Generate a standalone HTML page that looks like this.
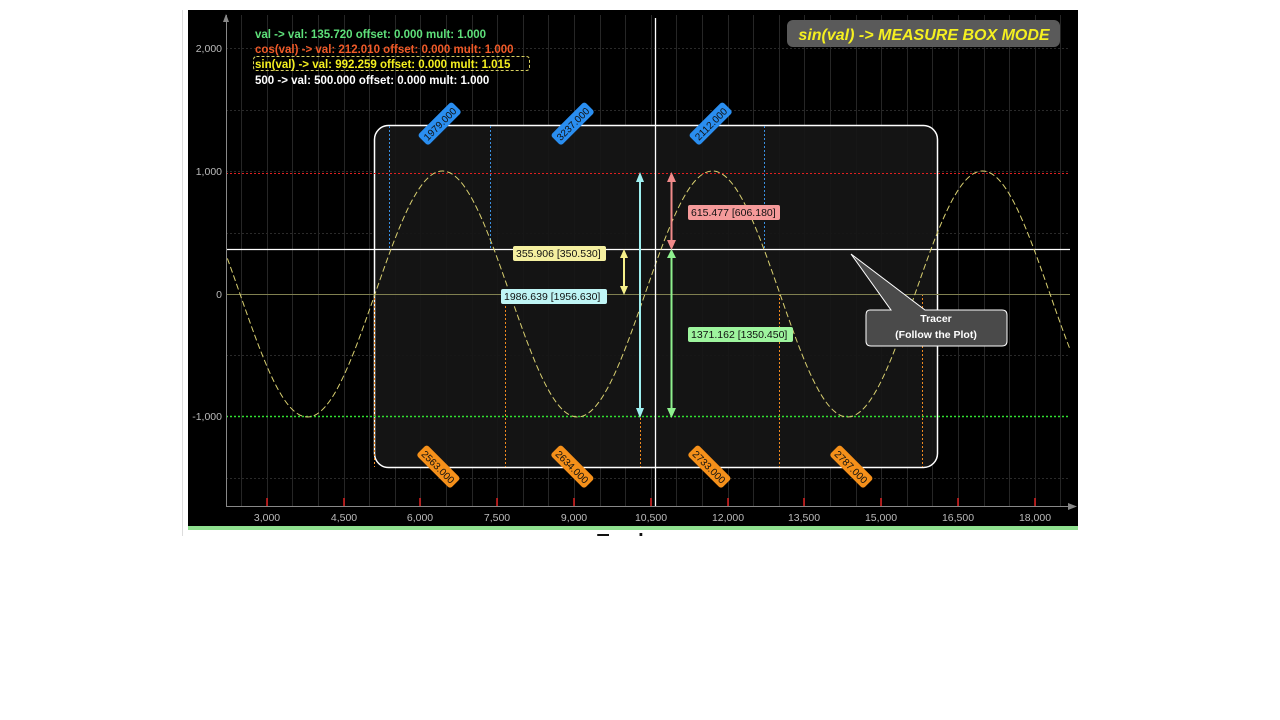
<!DOCTYPE html>
<html><head><meta charset="utf-8"><style>
html,body{margin:0;padding:0;background:#fff;width:1280px;height:720px;overflow:hidden;font-family:"Liberation Sans",sans-serif}
</style></head><body>
<svg width="1280" height="720" xmlns="http://www.w3.org/2000/svg" style="position:absolute;left:0;top:0;font-family:'Liberation Sans',sans-serif">
<defs><clipPath id="pc"><rect x="226" y="15" width="844" height="491"/></clipPath></defs>
<line x1="182.5" y1="10" x2="182.5" y2="536" stroke="#ddd"/>
<rect x="188" y="10" width="890" height="516" fill="#000"/>
<rect x="188" y="526" width="890" height="4" fill="#8fe08f"/>
<g stroke="#2a2a2a" stroke-width="1" stroke-dasharray="2 2">
<line x1="226" y1="48.5" x2="1070" y2="48.5"/><line x1="226" y1="110.5" x2="1070" y2="110.5"/>
<line x1="226" y1="171.5" x2="1070" y2="171.5"/><line x1="226" y1="233.5" x2="1070" y2="233.5"/>
<line x1="226" y1="355.5" x2="1070" y2="355.5"/><line x1="226" y1="478.5" x2="1070" y2="478.5"/>
</g>
<g stroke="#262626" stroke-width="1">
<line x1="241.5" y1="15" x2="241.5" y2="506"/><line x1="267.5" y1="15" x2="267.5" y2="506"/><line x1="292.5" y1="15" x2="292.5" y2="506"/><line x1="318.5" y1="15" x2="318.5" y2="506"/><line x1="344.5" y1="15" x2="344.5" y2="506"/><line x1="369.5" y1="15" x2="369.5" y2="506"/><line x1="395.5" y1="15" x2="395.5" y2="506"/><line x1="420.5" y1="15" x2="420.5" y2="506"/><line x1="446.5" y1="15" x2="446.5" y2="506"/><line x1="472.5" y1="15" x2="472.5" y2="506"/><line x1="497.5" y1="15" x2="497.5" y2="506"/><line x1="523.5" y1="15" x2="523.5" y2="506"/><line x1="548.5" y1="15" x2="548.5" y2="506"/><line x1="574.5" y1="15" x2="574.5" y2="506"/><line x1="600.5" y1="15" x2="600.5" y2="506"/><line x1="625.5" y1="15" x2="625.5" y2="506"/><line x1="651.5" y1="15" x2="651.5" y2="506"/><line x1="676.5" y1="15" x2="676.5" y2="506"/><line x1="702.5" y1="15" x2="702.5" y2="506"/><line x1="728.5" y1="15" x2="728.5" y2="506"/><line x1="753.5" y1="15" x2="753.5" y2="506"/><line x1="779.5" y1="15" x2="779.5" y2="506"/><line x1="804.5" y1="15" x2="804.5" y2="506"/><line x1="830.5" y1="15" x2="830.5" y2="506"/><line x1="856.5" y1="15" x2="856.5" y2="506"/><line x1="881.5" y1="15" x2="881.5" y2="506"/><line x1="907.5" y1="15" x2="907.5" y2="506"/><line x1="932.5" y1="15" x2="932.5" y2="506"/><line x1="958.5" y1="15" x2="958.5" y2="506"/><line x1="984.5" y1="15" x2="984.5" y2="506"/><line x1="1009.5" y1="15" x2="1009.5" y2="506"/><line x1="1035.5" y1="15" x2="1035.5" y2="506"/><line x1="1060.5" y1="15" x2="1060.5" y2="506"/>
</g>
<rect x="374.5" y="125.5" width="563" height="342" rx="14" fill="#161616" fill-opacity="0.92" stroke="#fff" stroke-width="1.5"/>
<g stroke="#3a8fe0" stroke-dasharray="2 2">
<line x1="389.5" y1="126" x2="389.5" y2="249"/><line x1="490.5" y1="126" x2="490.5" y2="249"/><line x1="764.5" y1="126" x2="764.5" y2="249"/>
</g>
<g stroke="#f08a20" stroke-dasharray="2 2">
<line x1="374.5" y1="294" x2="374.5" y2="467"/><line x1="505.5" y1="294" x2="505.5" y2="467"/><line x1="640.5" y1="294" x2="640.5" y2="467"/><line x1="779.5" y1="294" x2="779.5" y2="467"/><line x1="922.5" y1="294" x2="922.5" y2="467"/>
</g>
<line x1="226" y1="173.5" x2="1070" y2="173.5" stroke="#e02020" stroke-dasharray="2 2"/>
<line x1="226" y1="416.5" x2="1070" y2="416.5" stroke="#30e030" stroke-width="1.5" stroke-dasharray="2 2"/>
<line x1="226" y1="294.5" x2="1070" y2="294.5" stroke="#808050"/>
<line x1="226" y1="249.5" x2="1070" y2="249.5" stroke="#fff" stroke-width="1.3"/>
<path clip-path="url(#pc)" fill="none" stroke="#d8cf70" stroke-width="1" stroke-dasharray="6 3" d="M105,294 c22.56,-64.6 43.16,-123 67.5,-123 c24.34,0 44.94,58.6 67.5,123 c22.56,64.6 43.16,123 67.5,123 c24.34,0 44.94,-58.6 67.5,-123 c22.56,-64.6 43.16,-123 67.5,-123 c24.34,0 44.94,58.6 67.5,123 c22.56,64.6 43.16,123 67.5,123 c24.34,0 44.94,-58.6 67.5,-123 c22.56,-64.6 43.16,-123 67.5,-123 c24.34,0 44.94,58.6 67.5,123 c22.56,64.6 43.16,123 67.5,123 c24.34,0 44.94,-58.6 67.5,-123 c22.56,-64.6 43.16,-123 67.5,-123 c24.34,0 44.94,58.6 67.5,123 c22.56,64.6 43.16,123 67.5,123 c24.34,0 44.94,-58.6 67.5,-123"/>
<line x1="655.5" y1="18" x2="655.5" y2="506" stroke="#fff" stroke-width="1.3"/>
<line x1="226.5" y1="15" x2="226.5" y2="506" stroke="#888"/>
<line x1="226" y1="506.5" x2="1072" y2="506.5" stroke="#888"/>
<path d="M223,22 L226,14 L229,22Z M1068,503 L1077,506.5 L1068,510Z" fill="#888"/>
<g stroke="#e02020" stroke-width="1.5">
<line x1="267" y1="498" x2="267" y2="506"/><line x1="344" y1="498" x2="344" y2="506"/><line x1="420" y1="498" x2="420" y2="506"/><line x1="497" y1="498" x2="497" y2="506"/><line x1="574" y1="498" x2="574" y2="506"/><line x1="651" y1="498" x2="651" y2="506"/><line x1="728" y1="498" x2="728" y2="506"/><line x1="804" y1="498" x2="804" y2="506"/><line x1="881" y1="498" x2="881" y2="506"/><line x1="958" y1="498" x2="958" y2="506"/><line x1="1035" y1="498" x2="1035" y2="506"/>
</g>
<g fill="#bbb" font-size="10.5" text-anchor="middle">
<text x="267" y="521">3,000</text><text x="344" y="521">4,500</text><text x="420" y="521">6,000</text><text x="497" y="521">7,500</text><text x="574" y="521">9,000</text><text x="651" y="521">10,500</text><text x="728" y="521">12,000</text><text x="804" y="521">13,500</text><text x="881" y="521">15,000</text><text x="958" y="521">16,500</text><text x="1035" y="521">18,000</text>
</g>
<g fill="#bbb" font-size="10.5" text-anchor="end">
<text x="222" y="52">2,000</text><text x="222" y="175">1,000</text><text x="222" y="298">0</text><text x="222" y="420">-1,000</text>
</g>
<g stroke-width="2">
<line x1="640" y1="180" x2="640" y2="410" stroke="#9ef0f0"/><path d="M636,182 L640,172 L644,182Z M636,408 L640,418 L644,408Z" fill="#9ef0f0"/>
<line x1="671.5" y1="180" x2="671.5" y2="242" stroke="#f08a8a"/><path d="M667,182 L671.5,172 L676,182Z M667,240 L671.5,250 L676,240Z" fill="#f08a8a"/>
<line x1="624" y1="256" x2="624" y2="288" stroke="#f5f08a"/><path d="M620,258 L624,249 L628,258Z M620,286 L624,295 L628,286Z" fill="#f5f08a"/>
<line x1="671.5" y1="256" x2="671.5" y2="410" stroke="#8ef08e"/><path d="M667,258 L671.5,249 L676,258Z M667,408 L671.5,418 L676,408Z" fill="#8ef08e"/>
</g>
<g font-size="10.5" fill="#111">
<rect x="688" y="205" width="92" height="15" rx="2" fill="#f59a9a"/><text x="691" y="216">615.477 [606.180]</text>
<rect x="513" y="246" width="93" height="15" rx="2" fill="#f5f0a0"/><text x="516" y="257">355.906 [350.530]</text>
<rect x="501" y="289" width="106" height="15" rx="2" fill="#bff5f5"/><text x="504" y="300">1986.639 [1956.630]</text>
<rect x="688" y="327" width="105" height="15" rx="2" fill="#9ef59e"/><text x="691" y="338">1371.162 [1350.450]</text>
</g>
<g font-size="10" fill="#111">
<g transform="translate(440,124) rotate(-45)"><rect x="-24" y="-8" width="48" height="15" rx="3" fill="#2a8ef0"/><text x="0" y="3.5" text-anchor="middle">1979.000</text></g>
<g transform="translate(573,124) rotate(-45)"><rect x="-24" y="-8" width="48" height="15" rx="3" fill="#2a8ef0"/><text x="0" y="3.5" text-anchor="middle">3237.000</text></g>
<g transform="translate(711,124) rotate(-45)"><rect x="-24" y="-8" width="48" height="15" rx="3" fill="#2a8ef0"/><text x="0" y="3.5" text-anchor="middle">2112.000</text></g>
<g transform="translate(438,467) rotate(45)"><rect x="-24" y="-8" width="48" height="15" rx="3" fill="#f5901a"/><text x="0" y="3.5" text-anchor="middle">2563.000</text></g>
<g transform="translate(572,467) rotate(45)"><rect x="-24" y="-8" width="48" height="15" rx="3" fill="#f5901a"/><text x="0" y="3.5" text-anchor="middle">2634.000</text></g>
<g transform="translate(709,467) rotate(45)"><rect x="-24" y="-8" width="48" height="15" rx="3" fill="#f5901a"/><text x="0" y="3.5" text-anchor="middle">2733.000</text></g>
<g transform="translate(851,467) rotate(45)"><rect x="-24" y="-8" width="48" height="15" rx="3" fill="#f5901a"/><text x="0" y="3.5" text-anchor="middle">2787.000</text></g>
</g>
<path d="M851,254 L891,310 L870,310 Q866,310 866,315 L866,341 Q866,346 871,346 L1002,346 Q1007,346 1007,341 L1007,315 Q1007,310 1002,310 L925,310 Z" fill="#4a4a4a" stroke="#fff" stroke-width="1"/>
<text x="936" y="322" fill="#fff" font-size="10.5" font-weight="bold" text-anchor="middle">Tracer</text>
<text x="936" y="338" fill="#fff" font-size="10.5" font-weight="bold" text-anchor="middle">(Follow the Plot)</text>
<rect x="787" y="20" width="273" height="27" rx="6" fill="#5a5a5a"/>
<text x="924" y="40" fill="#f5f020" font-size="16" font-weight="bold" font-style="italic" text-anchor="middle">sin(val) -&gt; MEASURE BOX MODE</text>
<g font-size="11.5" font-weight="bold">
<text x="255" y="38" fill="#5ee07a">val -&gt;  val: 135.720 offset: 0.000 mult: 1.000</text>
<text x="255" y="53" fill="#f05a28">cos(val) -&gt;  val: 212.010 offset: 0.000 mult: 1.000</text>
<rect x="253.5" y="56.5" width="276" height="14" rx="3" fill="none" stroke="#d8d060" stroke-dasharray="3 2"/>
<text x="255" y="68" fill="#f5f020">sin(val) -&gt;  val: 992.259 offset: 0.000 mult: 1.015</text>
<text x="255" y="84" fill="#fff">500 -&gt;  val: 500.000 offset: 0.000 mult: 1.000</text>
</g>
<clipPath id="bt"><rect x="580" y="530" width="120" height="6"/></clipPath>
<text x="597" y="548" font-size="20" font-weight="bold" fill="#111" clip-path="url(#bt)">Tracker</text>
</svg>
</body></html>
